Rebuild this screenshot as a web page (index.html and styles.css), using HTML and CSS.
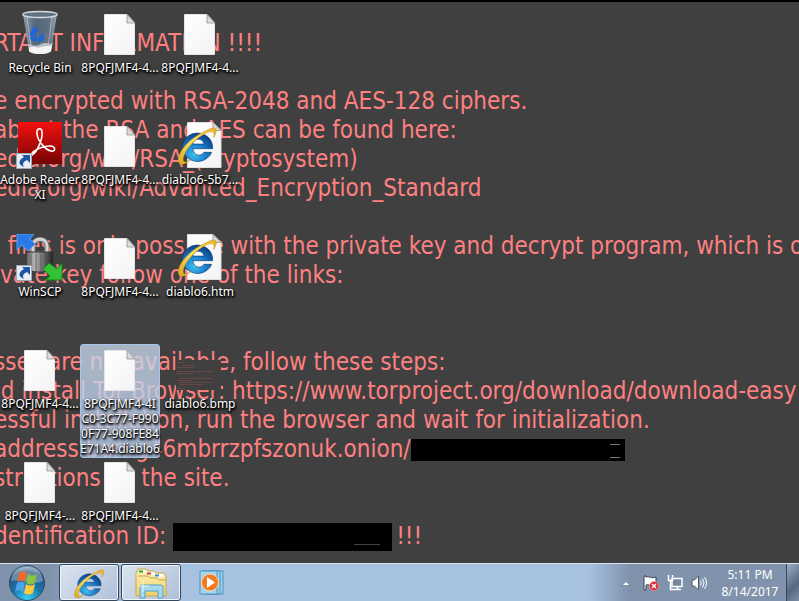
FILE: index.html
```html
<!DOCTYPE html>
<html lang="en">
<head>
<meta charset="utf-8">
<title>Desktop</title>
<link rel="stylesheet" href="styles.css">
</head>
<body>
<svg class="defs" aria-hidden="true">
  <defs>
    <linearGradient id="paper" x1="0" y1="0" x2="1" y2="1"><stop offset="0" stop-color="#fff"/><stop offset="1" stop-color="#f3f3f3"/></linearGradient>
    <linearGradient id="red" x1="0" y1="0" x2="0" y2="1"><stop offset="0" stop-color="#f51010"/><stop offset="1" stop-color="#740404"/></linearGradient>
    <radialGradient id="blue" cx=".4" cy=".75" r=".75"><stop offset="0" stop-color="#3fc4f4"/><stop offset=".5" stop-color="#1b7cc8"/><stop offset="1" stop-color="#0c4288"/></radialGradient>
    <linearGradient id="gold" x1="0" y1="1" x2="1" y2="0"><stop offset="0" stop-color="#d9a820"/><stop offset=".5" stop-color="#ffe060"/><stop offset="1" stop-color="#f0b020"/></linearGradient>
    <linearGradient id="steel" x1="0" y1="0" x2="1" y2="0"><stop offset="0" stop-color="#555"/><stop offset=".3" stop-color="#b5b5b5"/><stop offset=".6" stop-color="#777"/><stop offset="1" stop-color="#222"/></linearGradient>
    <linearGradient id="glass" x1="0" y1="0" x2="1" y2="0"><stop offset="0" stop-color="#97a9b8"/><stop offset=".35" stop-color="#546a7e"/><stop offset=".75" stop-color="#617386"/><stop offset="1" stop-color="#a4afb8"/></linearGradient>
    <linearGradient id="folder" x1="0" y1="0" x2="0" y2="1"><stop offset="0" stop-color="#fff3b4"/><stop offset="1" stop-color="#ecd06c"/></linearGradient>
    <radialGradient id="orb" cx=".5" cy=".95" r=".95"><stop offset="0" stop-color="#35d2f5"/><stop offset=".45" stop-color="#1b75ac"/><stop offset=".8" stop-color="#24517c"/><stop offset="1" stop-color="#9ab4ca"/></radialGradient>
    <symbol id="page" viewBox="0 0 48 48">
      <path d="M8.500 4.500H31l7.500 8V44.500H8.500z" fill="url(#paper)" stroke="#e4e4e4"/>
      <path d="M31 4.500v8.500h8z" fill="#dadada" stroke="#888" stroke-width=".7"/>
    </symbol>
    <symbol id="e" viewBox="0 0 48 48">
      <path d="M41 28H19.500c.5 8 9.500 9 12 4H40A16.500 15.500 0 1 1 41 28zM19.500 23H31.500c-.5-7-11.500-7-12 0z" fill="url(#blue)" fill-rule="evenodd" stroke="#0a3d80" stroke-width=".7"/>
      <path d="M35 8C45 2 48 7 42 16 44 9 41 8 34 11 20 18 9 32 9 40c0 4 4 3 9-1C8 49 0 46 5 34 10 23 23 13 35 8z" fill="url(#gold)" stroke="#b78a18" stroke-width=".5"/>
    </symbol>
    <symbol id="htm" viewBox="0 0 48 48">
      <path d="M11.500 .5H37l8 8V45.500H11.500z" fill="url(#paper)" stroke="#e0e0e0"/>
      <path d="M37 .5v8h8z" fill="#dadada" stroke="#888" stroke-width=".7"/>
      <use href="#e" x="-1" y="1" width="44" height="44"/>
    </symbol>
    <symbol id="link" viewBox="0 0 16 16">
      <path d="M.5.5h15v15H.5z" fill="#e9edf2" stroke="#9ba6b4"/>
      <path d="M6 2h8v8l-3-3c-4 2-5 4-3 7-6-2-6-7 0-10z" fill="#1c56a8"/>
    </symbol>
  </defs>
</svg>

<main class="desktop">
  <div class="wallpaper">
    <p>RTANT INFORMATION !!!!</p>
    <p></p>
    <p>e encrypted with RSA-2048 and AES-128 ciphers.</p>
    <p>about the RSA and AES can be found here:</p>
    <p>edia.org/wiki/RSA_(cryptosystem)</p>
    <p>edia.org/wiki/Advanced_Encryption_Standard</p>
    <p></p>
    <p>  files is only possible with the private key and decrypt program, which is on</p>
    <p>ivate key follow one of the links:</p>
    <p></p>
    <p></p>
    <p>sses are not available, follow these steps:</p>
    <p> d install Tor Browser: https://www.torproject.org/download/download-easy</p>
    <p>essful installation, run the browser and wait for initialization.</p>
    <p>address bar: g46mbrrzpfszonuk.onion/<span class="redacted path"></span></p>
    <p>structions on the site.</p>
    <p></p>
    <p>dentification ID: <span class="redacted id"></span>!!!</p>
  </div>

  <div class="icons">
    <button class="item"><svg class="icon" viewBox="0 0 48 48">
      <path d="M7 4l6 37c2 4 20 4 22 0l6-37z" fill="url(#glass)" opacity=".92"/>
      <path d="M12 34l1 7c2 4 20 4 22 0l2-9c-3 4-7-1-12 2s-9 1-13 0z" fill="#b9bec3"/>
      <path d="M13 38c6-3 7 1 12-1s7 0 11-2l-1 6c-2 4-20 4-22 0z" fill="#f4f4f4"/>
      <path d="M13 25l5-9 5 5-3 1 1 7zM13 27l3 4h6l-3-5zM23 26l5-3-1 8-6 1z" fill="#1e65d8"/>
      <path d="M11 7l4 29M36 7l-4 29" stroke="#dfe7ed" stroke-width="1" opacity=".5"/>
      <ellipse cx="24" cy="4.500" rx="17" ry="3" fill="#62717f" stroke="#d1d7dd" stroke-width="1.500"/>
    </svg><span class="label">Recycle Bin</span></button>

    <button class="item"><svg class="icon" viewBox="0 0 48 48">
      <path d="M2 0h44v42H2z" fill="url(#red)"/>
      <path d="M17 32c3-1 10-14 9-22 0-5-6-4-5 2 1 8 9 16 14 17 5 1 5-5-1-5-6 0-13 3-17 6-3 3-1 4 0 2" fill="none" stroke="#fff" stroke-width="1.600"/>
      <use href="#link" x="0" y="31" width="16" height="16"/>
    </svg><span class="label">Adobe Reader<br>XI</span></button>

    <button class="item"><svg class="icon" viewBox="0 0 48 48">
      <path d="M17 19v-7c0-9 14-9 14 0v7" fill="none" stroke="#777" stroke-width="5"/>
      <path d="M17 19v-7c0-9 14-9 14 0v7" fill="none" stroke="#d5d5d5" stroke-width="3"/>
      <path d="M10 18h27v17c-2 4-25 4-27 0z" fill="url(#steel)" stroke="#333"/>
      <path d="M15 20v16M20 20v17M25 20v17M30 20v16" stroke="#444" opacity=".6"/>
      <path d="M1 0h17l-4 5 5 5-7 7-6-6-5 5z" fill="#2a7bea" stroke="#5b9bf5"/>
      <path d="M46 46H29l5-4-7-7 6-6 8 6 5-6z" fill="#35c135" stroke="#168016"/>
      <use href="#link" x="0" y="31" width="16" height="16"/>
    </svg><span class="label">WinSCP</span></button>

    <button class="item"><svg class="icon"><use href="#page"/></svg><span class="label">8PQFJMF4-4...</span></button>
    <button class="item"><svg class="icon"><use href="#page"/></svg><span class="label">8PQFJMF4-...</span></button>
    <button class="item"><svg class="icon"><use href="#page"/></svg><span class="label">8PQFJMF4-4...</span></button>
    <button class="item"><svg class="icon"><use href="#page"/></svg><span class="label">8PQFJMF4-4...</span></button>
    <button class="item"><svg class="icon"><use href="#page"/></svg><span class="label">8PQFJMF4-4...</span></button>
    <button class="item selected"><svg class="icon"><use href="#page"/></svg><span class="label">8PQFJMF4-4I<br>C0-3C77-F990<br>0F77-908FE84<br>E71A4.diablo6</span></button>
    <button class="item"><svg class="icon"><use href="#page"/></svg><span class="label">8PQFJMF4-4...</span></button>
    <button class="item"><svg class="icon"><use href="#page"/></svg><span class="label">8PQFJMF4-4...</span></button>
    <button class="item"><svg class="icon"><use href="#htm"/></svg><span class="label">diablo6-5b7...</span></button>
    <button class="item"><svg class="icon"><use href="#htm"/></svg><span class="label">diablo6.htm</span></button>
    <button class="item"><svg class="icon" viewBox="0 0 48 48">
      <path d="M0 14h45v30H0z" fill="#404040"/>
      <path d="M1 16.500h8M6 19.500h13M1 21.500h16M1 25.500h36M1 27.500h17M1 34.500h14M4 32.500h32M3 36.500h33M3 38.500h25M1 42.500h9" stroke="#7a4848" stroke-width=".8" stroke-dasharray="5 .7 3 .6"/>
    </svg><span class="label">diablo6.bmp</span></button>
  </div>
</main>

<footer class="taskbar">
  <button class="start" aria-label="Start"><svg width="38" height="38" viewBox="0 0 38 38">
    <circle cx="19" cy="19" r="17.500" fill="url(#orb)" stroke="#284b6d"/>
    <path d="M3 17C4 -2 34 -2 35 17 24 22 14 14 3 17z" fill="#fff" opacity=".3"/>
    <path d="M11 9c3-2 5-2 8 0l-2 9c-3-2-5-2-8 0z" fill="#ee6a2c"/>
    <path d="M20 10c3 2 6 2 9 0l-2 9c-3 2-6 2-9 0z" fill="#8ac43f"/>
    <path d="M9 19c3-2 5-2 8 0l-2 9c-3-2-5-2-8 0z" fill="#4aa4e6"/>
    <path d="M18 20c3 2 6 2 9 0l-2 9c-3 2-6 2-9 0z" fill="#fbc93a"/>
  </svg></button>
  <button class="task open" aria-label="Internet Explorer"><svg width="34" height="34"><use href="#e"/></svg></button>
  <button class="task open" aria-label="Windows Explorer"><svg width="34" height="34" viewBox="0 0 34 34">
    <path d="M2 7l2-4h8l2 2h6l1 2h9l2 3v20H2z" fill="url(#folder)" stroke="#c7a652"/>
    <path d="M4 10h10l2 2h7l2 2h7" fill="none" stroke="#c7a652"/>
    <path d="M5 5.500h7M13 7.500h8M21 9.500h8" stroke="#fff" stroke-width="3"/>
    <path d="M5 5.500h4" stroke="#27a32a" stroke-width="2"/><path d="M13 7.500h4" stroke="#d13c2e" stroke-width="2"/><path d="M21 9.500h4" stroke="#338bd8" stroke-width="2"/>
    <path d="M6 32V21q0-2 2-2h19q2 0 2 2v11h-5v-7H11v7z" fill="#a5d8f1" stroke="#549fcb"/>
    <path d="M9 14v12M4 20h11" stroke="#fff" opacity=".8"/>
  </svg></button>
  <button class="task" aria-label="Windows Media Player"><svg width="34" height="34" viewBox="0 0 34 34">
    <path d="M9 5h18v23H9z" fill="#9bd0ea" stroke="#4c93bd"/><path d="M6 5h18v23H6z" fill="#9bd0ea" stroke="#4c93bd"/><path d="M4 5h17v23H4z" fill="#a5d4ec" stroke="#4c93bd"/>
    <circle cx="14" cy="16.500" r="8.500" fill="#f47a1e" stroke="#fcd9b8"/><path d="M11 11l8 5.500-8 5.500z" fill="#fff"/>
  </svg></button>
  <div class="tray">
    <button aria-label="Show hidden icons"><svg width="18" height="16" viewBox="0 0 18 16"><path d="M5 10.500l4-4 4 4z" fill="#fff" stroke="#4c5968" stroke-width=".5"/></svg></button>
    <button aria-label="Action Center"><svg width="16" height="16" viewBox="0 0 16 16"><path d="M1 1h2v1c4-1 5 2 10 0v8c-5 2-6-1-10 0v5H1z" fill="#fff" stroke="#37424f"/><circle cx="11" cy="11" r="4.500" fill="#d9262a" stroke="#f3b0b0" stroke-width=".6"/><path d="M9 9l4 4M13 9l-4 4" stroke="#fff" stroke-width="1.500"/></svg></button>
    <button aria-label="Network"><svg width="16" height="16" viewBox="0 0 16 16"><path d="M5 3.500h10v8H5zM7 14.500h7M10.500 12v2" fill="#73869c" stroke="#fff" stroke-width="1.500"/><path d="M1.500 0v5.500h4V0M3.500 6v8.500H7" fill="none" stroke="#fff" stroke-width="1.500"/></svg></button>
    <button aria-label="Volume"><svg width="16" height="16" viewBox="0 0 16 16"><path d="M1 5h2.500l4-4v14l-4-4H1z" fill="#fff" stroke="#4c5968"/><path d="M9.500 5.500q1.500 2.500 0 5M11.500 3.500q3 4.500 0 9M13.500 2q4 6 0 12" fill="none" stroke="#fff"/></svg></button>
  </div>
  <div class="clock"><span>5:11 PM</span><span>8/14/2017</span></div>
  <button class="peek" aria-label="Show desktop"></button>
</footer>
</body>
</html>
```
FILE: styles.css
```css
* { box-sizing: border-box; }
body { margin: 0; min-height: 100vh; display: flex; flex-direction: column; overflow: hidden; background: #404040; font-family: "Noto Sans", sans-serif; }
button { border: 0; padding: 0; background: none; font: inherit; color: inherit; }
.defs { position: absolute; width: 0; height: 0; }
.desktop { flex: 1; display: grid; border-top: 2px solid #000; }
.wallpaper, .icons { grid-area: 1 / 1; min-width: 0; }
.wallpaper { overflow: hidden; padding-top: 27px; font: 24px/29px "DejaVu Sans Condensed", "DejaVu Sans", sans-serif; font-stretch: condensed; color: #ff8080; }
.wallpaper p { margin: 0 0 0 -6px; height: 29px; white-space: pre; }
.redacted { display: inline-block; vertical-align: middle; background: #000; }
.path { width: 214px; height: 22px; padding: 5px 5px 5px 199px; }
.path::before { content: ""; display: block; height: 12px; border: solid #777; border-width: 1px 0; }
.id { width: 219px; height: 28px; margin-right: 4px; padding: 21px 12px 0 181px; }
.id::before { content: ""; display: block; height: 1px; background: #444; }
.icons { display: grid; grid-auto-flow: column; grid-template-rows: repeat(5, 112px); grid-auto-columns: 80px; align-items: start; padding-top: 4px; height: 561px; z-index: 1; }
.item { display: flex; flex-direction: column; align-items: center; gap: 2px; padding-top: 4px; color: #fff; font-size: 12px; line-height: 15px; text-shadow: 1px 1px 2px #000, 0 1px 2px #000, 1px 2px 3px #000; }
.icon { width: 48px; height: 48px; }
.label { white-space: nowrap; }
.selected { height: 114px; margin-top: 2px; padding-top: 1px; background: linear-gradient(#cddcefc0, #b4cdeec8); border: 1px solid #a5c6ec; border-radius: 3px; }
.taskbar { display: flex; height: 38px; border-top: 1px solid #d6e3f0; background: linear-gradient(90deg, #8193ac 0, #8193ac 50px, #a7c1e0 130px, #a7c1e0 calc(100% - 210px), #8193ac calc(100% - 170px), #8193ac); }
.start { width: 59px; display: flex; padding-left: 8px; }
.task { width: 60px; margin-right: 2px; display: grid; place-items: center; }
.open { border: 1px solid #36475c; border-radius: 3px; background: linear-gradient(135deg, #dbe4ef, #afc0d9); box-shadow: inset 0 0 0 1px #eef4fb; }
.tray { display: flex; align-items: center; gap: 8px; margin-left: auto; padding-right: 7px; }
.tray svg { display: block; }
.clock { display: flex; flex-direction: column; align-items: center; justify-content: center; width: 72px; color: #fff; font-size: 12px; line-height: 17px; }
.peek { width: 13px; border-left: 1px solid #36475c; background: linear-gradient(135deg, #9badc1, #56677e 60%, #7d8fa6); }
```
